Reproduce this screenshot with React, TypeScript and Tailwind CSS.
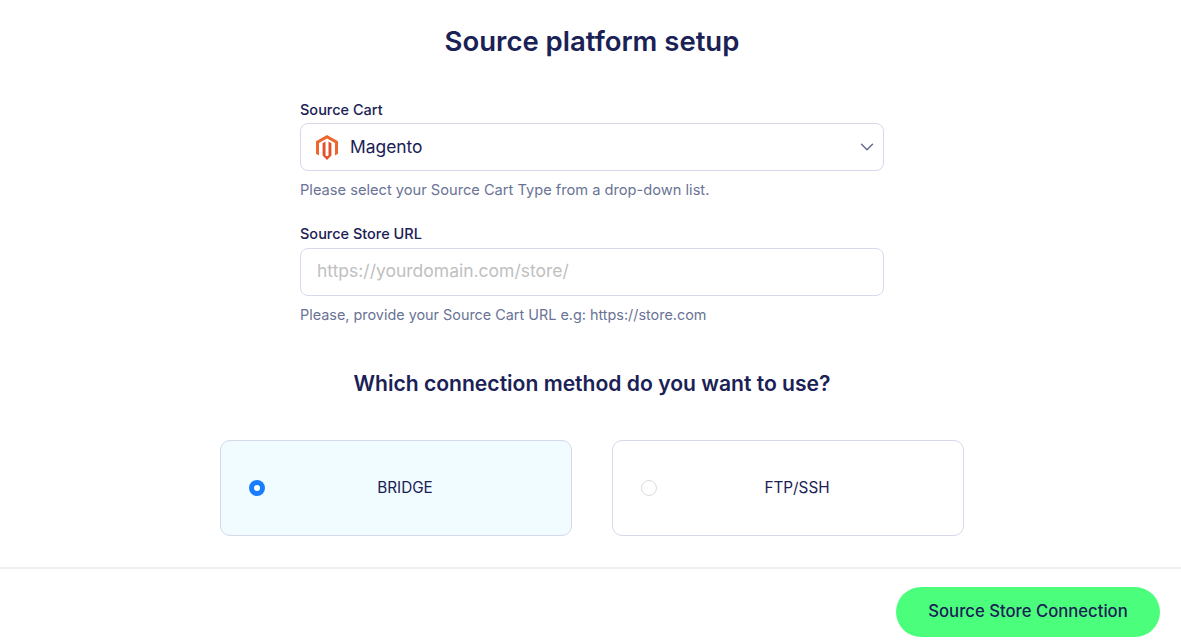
import { ChevronDown } from "lucide-react";

const font = { fontFamily: "Inter, 'Noto Sans', sans-serif" };

function MagentoLogo() {
  return (
    <svg width="22" height="25" viewBox="0 0 22 25" className="shrink-0">
      <path
        fill="#ee672f"
        d="M11 0 L22 6.3 V18.8 L19 20.5 V8 L11 3.4 L3 8 V20.5 L0 18.8 V6.3 Z"
      />
      <path fill="#e2512a" d="M12.5 6.6 L15.4 8.3 V20.5 L11 25 L6.6 20.5 V8.3 L9.5 6.6 V20.4 L11 21.3 L12.5 20.4 Z" />
    </svg>
  );
}

function MethodCard({ label, active }: { label: string; active?: boolean }) {
  return (
    <div
      className={`flex h-[96px] w-[352px] items-center rounded-[10px] border border-[#d5d9ea] pl-[28px] ${
        active ? "bg-[#f0fcff]" : "bg-white"
      }`}
    >
      {active ? (
        <span className="h-[16px] w-[16px] shrink-0 rounded-full border-[5px] border-[#1a7cff] bg-white" />
      ) : (
        <span className="h-[16px] w-[16px] shrink-0 rounded-full border border-[#dcdcdc] bg-white" />
      )}
      <span className="ml-[-26px] flex-1 text-center text-[15.3px] text-[#1a2155]">{label}</span>
    </div>
  );
}

export default function App() {
  return (
    <div className="h-[643px] w-full overflow-hidden bg-white" style={font}>
      <div className="flex h-[567px] flex-col items-center pl-[3px]">
        <h1 className="mt-[22px] text-[27.5px] leading-[38px] font-semibold text-[#1a2155]">Source platform setup</h1>

        <div className="mt-[40px] w-[584px]">
          <label className="block text-[14.5px] leading-[20px] font-medium text-[#1a2155]">Source Cart</label>
          <div className="mt-[3px] flex h-[48px] items-center rounded-[8px] border border-[#d5d9ea] pr-[5px] pl-[15px]">
            <MagentoLogo />
            <span className="ml-[12px] flex-1 text-[17.4px] text-[#1a2155]">Magento</span>
            <ChevronDown strokeWidth={1.5} className="h-[22px] w-[22px] text-[#5f678c]" />
          </div>
          <p className="mt-[9px] text-[14.65px] leading-[20px] text-[#6a7396]">
            Please select your Source Cart Type from a drop-down list.
          </p>

          <label className="mt-[24px] block text-[14.5px] leading-[20px] font-medium text-[#1a2155]">
            Source Store URL
          </label>
          <input
            readOnly
            placeholder="https://yourdomain.com/store/"
            className="mt-[4px] block h-[48px] w-full rounded-[8px] border border-[#d5d9ea] px-[16px] pb-[4px] text-[17.5px] text-[#1a2155] outline-none placeholder:text-[#c0c0c0]"
          />
          <p className="mt-[9px] text-[14.4px] leading-[20px] text-[#6a7396]">
            Please, provide your Source Cart URL e.g: https://store.com
          </p>
        </div>

        <h2 className="mt-[45px] text-[21.1px] leading-[28px] font-semibold text-[#1a2155]">
          Which connection method do you want to use?
        </h2>

        <div className="mt-[42px] flex gap-[40px]">
          <MethodCard label="BRIDGE" active />
          <MethodCard label="FTP/SSH" />
        </div>
      </div>

      <div className="flex justify-end border-t-2 border-[#eeeef3] pt-[18px] pr-[21px]">
        <button className="h-[50px] w-[264px] rounded-full bg-[#4bff7c] text-[16.7px] font-medium text-[#1a2155]">
          Source Store Connection
        </button>
      </div>
    </div>
  );
}
